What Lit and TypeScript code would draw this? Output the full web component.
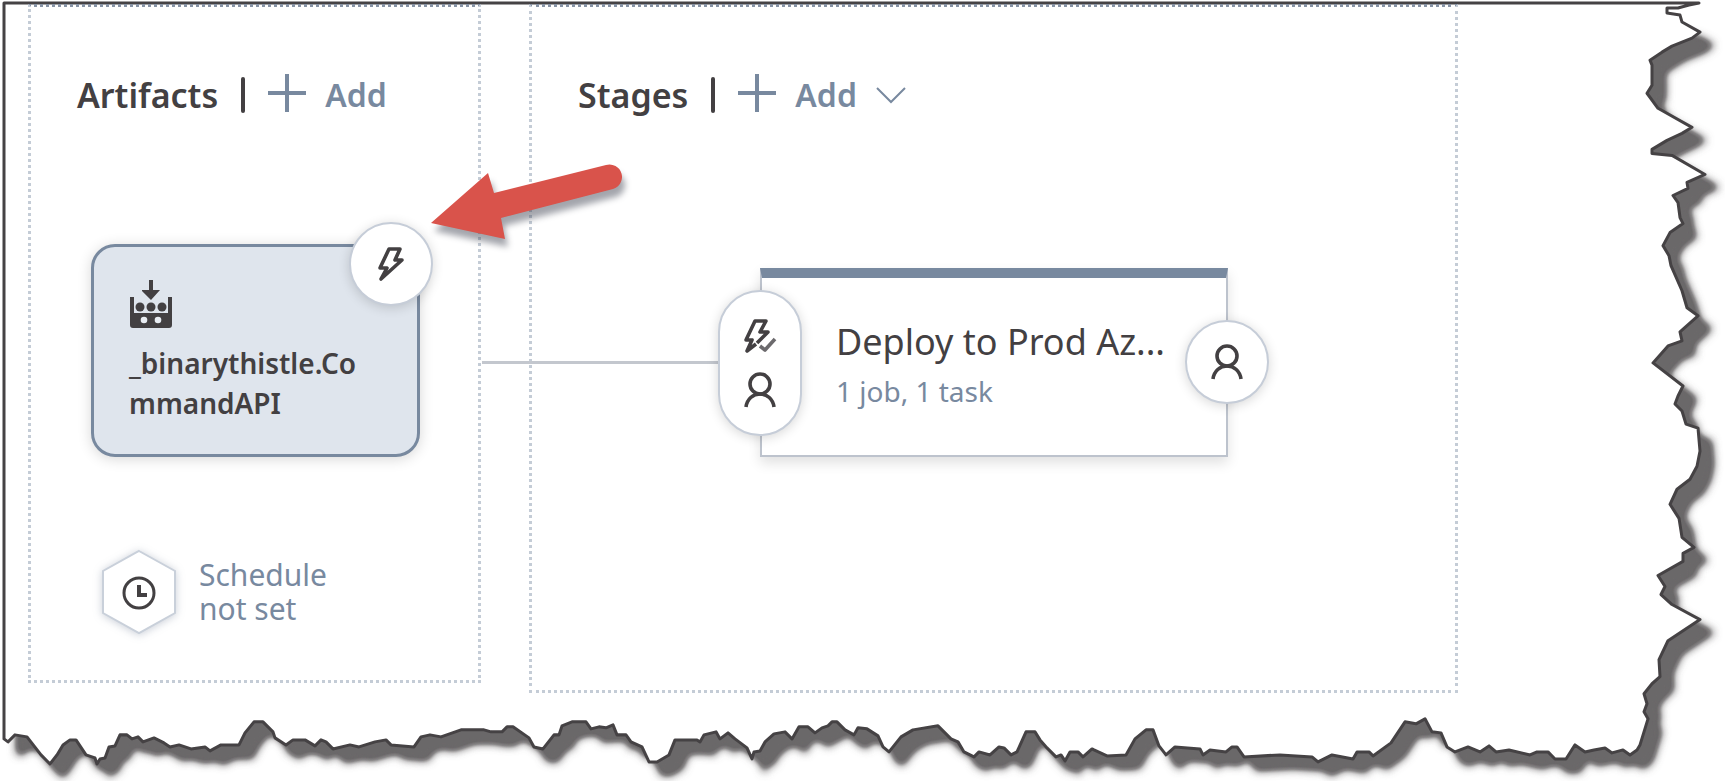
import { LitElement, html, css } from "lit";
import { customElement } from "lit/decorators.js";

type Point = [number, number];

// Torn right side, from the top corner down.
const rightTear: Point[] = [
  [1699, 3], [1689, 5], [1678, 8], [1667, 8], [1667, 13], [1680, 15], [1682, 22], [1700, 32], [1692, 38],
  [1672, 46], [1662, 52], [1650, 60], [1652, 65], [1652, 85], [1647, 93], [1658, 108], [1692, 127], [1682, 133],
  [1667, 140], [1652, 149], [1652, 153], [1672, 155], [1705, 174], [1687, 182], [1688, 188], [1673, 195],
  [1678, 202], [1680, 217], [1683, 223], [1670, 232], [1663, 245], [1669, 255], [1671, 265], [1682, 290],
  [1687, 307], [1698, 315], [1680, 331], [1682, 340], [1668, 345], [1653, 362], [1683, 385], [1678, 395],
  [1675, 403], [1682, 410], [1686, 423], [1698, 427], [1700, 450], [1697, 465], [1690, 478], [1677, 488],
  [1670, 503], [1679, 517], [1682, 536], [1694, 546], [1683, 552], [1683, 560], [1658, 574], [1665, 585],
  [1661, 593], [1672, 603], [1700, 618], [1668, 639], [1659, 658], [1660, 675], [1652, 682], [1644, 692],
  [1647, 702], [1644, 710], [1648, 717], [1640, 743], [1637, 748],
];

// Torn bottom side in three stretches, left to right, each in finer units from its own start.
const UNIT = 2.8;
const bottomStretches: { start: number; points: Point[] }[] = [
  {
    start: 0,
    points: [
      [10, 135], [22, 144], [42, 124], [75, 128], [115, 180], [140, 205], [160, 180], [175, 152], [195, 136],
      [212, 136], [240, 178], [265, 188], [272, 203], [280, 190], [295, 188], [305, 158], [322, 155], [335, 122],
      [355, 122], [370, 135], [385, 128], [400, 142], [430, 132], [460, 145], [475, 158], [500, 152], [535, 163],
      [575, 158], [588, 168], [620, 152], [670, 150], [685, 118], [712, 86], [735, 88], [765, 115], [770, 132],
      [800, 150], [820, 137], [855, 137], [882, 155], [900, 138], [912, 142], [932, 163], [980, 152], [1005, 158],
      [1050, 142], [1080, 137], [1095, 152], [1160, 158], [1180, 130], [1205, 123], [1235, 130], [1290, 108],
      [1355, 108], [1375, 116], [1405, 116], [1420, 100], [1435, 102], [1480, 132], [1495, 158], [1520, 163],
    ],
  },
  {
    start: 540,
    points: [
      [40, 122], [52, 122], [62, 98], [90, 86], [130, 86], [142, 106], [165, 100], [185, 104], [205, 96],
      [215, 122], [240, 124], [255, 142], [285, 158], [305, 198], [328, 198], [360, 180], [378, 137], [440, 137],
      [448, 142], [460, 122], [492, 115], [505, 135], [525, 118], [545, 135], [580, 160], [593, 190], [600, 172],
      [615, 168], [630, 142], [655, 120], [685, 115], [705, 135], [725, 100], [750, 102], [770, 118], [790, 104],
      [805, 98], [818, 86], [832, 86], [855, 108], [878, 122], [890, 104], [915, 106], [945, 125], [960, 158],
      [976, 172], [1010, 130], [1045, 110], [1115, 98], [1150, 135], [1170, 142], [1188, 172], [1215, 184],
      [1230, 172], [1260, 178], [1285, 157], [1300, 160], [1320, 180], [1335, 170], [1360, 115], [1385, 115],
      [1400, 138], [1420, 160], [1445, 184], [1460, 180], [1470, 195], [1485, 172], [1505, 172], [1520, 186],
      [1545, 163],
    ],
  },
  {
    start: 1080,
    points: [
      [40, 165], [75, 183], [130, 178], [155, 135], [185, 108], [205, 108], [220, 155], [240, 180], [265, 157],
      [335, 163], [345, 178], [365, 165], [410, 172], [425, 157], [440, 157], [460, 184], [560, 180], [650, 184],
      [665, 198], [705, 178], [765, 190], [775, 172], [810, 172], [820, 183], [870, 145], [910, 87], [940, 92],
      [965, 77], [985, 115], [1010, 118], [1028, 158], [1050, 172], [1085, 157], [1120, 172], [1145, 155],
      [1165, 172], [1200, 165], [1260, 178], [1280, 172], [1310, 172], [1330, 190], [1360, 190], [1385, 150],
      [1415, 172], [1440, 165], [1470, 160], [1490, 174], [1520, 165], [1540, 178],
    ],
  },
];

const bottomTear: Point[] = bottomStretches
  .flatMap(({ start, points }) =>
    points.map(([x, y]): Point => [Math.round(start + x / UNIT), Math.round(689 + y / UNIT)]),
  )
  .reverse();

const toPoints = (points: Point[]) => points.map((p) => p.join(",")).join(" ");

const outline = toPoints([[4, 3], ...rightTear, ...bottomTear]);

// The shadow leaves out the small notches beside the top corner.
const shadow = toPoints([[8, 3], [1650, 18], [1685, 24], ...rightTear.slice(7), ...bottomTear]);

const paper = html`
  <svg class="paper" viewBox="0 0 1725 781" preserveAspectRatio="none" aria-hidden="true">
    <defs>
      <filter id="fade" x="-5%" y="-5%" width="110%" height="110%">
        <feMorphology operator="dilate" radius="1" />
        <feGaussianBlur stdDeviation="4" />
        <feComponentTransfer><feFuncA type="table" tableValues="0 0.3 0.8 1 1" /></feComponentTransfer>
      </filter>
    </defs>
    <polygon points=${shadow} fill="#6b6869" transform="translate(13 13)" filter="url(#fade)" />
    <polygon points=${outline} fill="#fff" stroke="#454244" stroke-width="3" stroke-linejoin="round" />
  </svg>
`;

const plus = html`
  <svg class="plus" viewBox="0 0 38 38" aria-hidden="true"><path d="M19 0V38M0 19H38" /></svg>
`;

const bolt = html`
  <svg class="icon" viewBox="0 0 28 36" width="28" height="36" aria-hidden="true">
    <path d="M12 3H23L18 14H25L4 33L10 22H3Z" />
  </svg>
`;

const boltCheck = html`
  <svg class="icon" viewBox="0 0 34 36" width="34" height="36" aria-hidden="true">
    <path d="M13 26L4 33L9 22H3L12 3H23L17 14H25L14 25" />
    <path class="check" d="M17 28L22 32L32 21" />
  </svg>
`;

const person = html`
  <svg class="icon" viewBox="0 0 34 36" width="34" height="36" aria-hidden="true">
    <circle cx="17" cy="12" r="10" />
    <path d="M3 35C4 27 10 22 17 22S30 27 31 35" />
  </svg>
`;

@customElement("app-root")
export class AppRoot extends LitElement {
  static styles = css`
    :host {
      display: block;
      position: relative;
      min-height: 100vh;
      box-sizing: border-box;
      padding: 4px 267px 90px 28px;
      background: #fff;
      color: #434042;
      font-family: "Noto Sans", "Open Sans", sans-serif;
    }
    .paper {
      position: absolute;
      inset: 0;
      width: 100%;
      height: 100%;
    }
    .board {
      position: relative;
      display: flex;
      align-items: flex-start;
      gap: 48px;
    }
    .column {
      box-sizing: border-box;
      border: 3px dotted #c4ccd6;
      border-top-color: #8793a5;
    }
    .artifacts {
      flex: 0 0 453px;
      min-height: 679px;
      padding: 60px 58px 0 60px;
    }
    .stages {
      flex: 1 0 720px;
      min-height: 689px;
      padding: 60px 46px 0;
    }
    .head {
      display: flex;
      align-items: center;
      height: 56px;
    }
    .artifacts .head {
      margin-left: -14px;
    }
    h2 {
      margin: 0;
      font-size: 34px;
      line-height: 40px;
      font-weight: 600;
    }
    .rule {
      width: 4px;
      height: 36px;
      margin: 0 23px;
      border-radius: 2px;
      background: #434042;
    }
    button {
      margin: 0;
      padding: 0;
      border: 0;
      background: none;
      color: inherit;
      font: inherit;
      cursor: pointer;
    }
    .add {
      display: flex;
      align-items: center;
      gap: 19px;
      color: #78899f;
      font-size: 32px;
      line-height: 40px;
      font-weight: 600;
    }
    .plus {
      width: 38px;
      height: 38px;
      margin-top: -4px;
      fill: none;
      stroke: #78899f;
      stroke-width: 4;
    }
    .chevron {
      width: 30px;
      height: 18px;
      fill: none;
      stroke: #78899f;
      stroke-width: 2;
    }
    .icon {
      fill: none;
      stroke: #434042;
      stroke-width: 3.6;
      stroke-linejoin: round;
    }
    .check {
      stroke: #6c6a6d;
    }
    .artifact {
      position: relative;
      box-sizing: border-box;
      height: 213px;
      margin-top: 121px;
      padding: 32px 35px;
      border: 3px solid #78899f;
      border-radius: 24px;
      background: #dfe5ed;
      box-shadow: 0 2px 14px rgba(0, 0, 0, 0.16);
    }
    .build {
      display: block;
      width: 44px;
      height: 50px;
      fill: #434042;
    }
    .name {
      margin: 14px 0 0;
      width: 244px;
      font-size: 28px;
      line-height: 40px;
      font-weight: 600;
    }
    .badge {
      position: absolute;
      box-sizing: border-box;
      display: flex;
      flex-direction: column;
      align-items: center;
      justify-content: center;
      width: 84px;
      height: 84px;
      border: 2px solid #c6cdd8;
      border-radius: 42px;
      background: #fff;
      box-shadow: 0 2px 12px rgba(0, 0, 0, 0.16);
    }
    .trigger {
      top: -25px;
      right: -16px;
    }
    .pre {
      top: 12px;
      left: -44px;
      height: 146px;
      gap: 18px;
    }
    .post {
      top: 42px;
      right: -43px;
    }
    .schedule {
      display: flex;
      align-items: center;
      gap: 12px;
      margin-top: 85px;
      color: #78899f;
      font-size: 30px;
      line-height: 34px;
      text-align: left;
    }
    .hex {
      width: 96px;
      height: 100px;
      flex: none;
      overflow: visible;
      filter: drop-shadow(0 1px 4px rgba(60, 80, 110, 0.28));
    }
    .stage {
      position: relative;
      box-sizing: border-box;
      width: 468px;
      height: 189px;
      margin: 145px 0 0 182px;
      padding: 40px 60px 0 74px;
      border: 2px solid #bdc3cd;
      border-top: 10px solid #78899f;
      background: #fff;
      box-shadow: 0 6px 12px rgba(0, 0, 0, 0.12);
    }
    .link {
      position: absolute;
      top: 83px;
      right: 100%;
      width: 280px;
      height: 3px;
      background: #c3c7ce;
    }
    h3 {
      margin: 0;
      font-size: 36px;
      line-height: 48px;
      font-weight: 400;
      white-space: nowrap;
    }
    .jobs {
      display: block;
      color: #78899f;
      font-size: 28px;
      line-height: 40px;
      margin-top: 5px;
      text-decoration: none;
      white-space: nowrap;
    }
    .pointer {
      position: absolute;
      left: 420px;
      top: 150px;
      width: 220px;
      height: 110px;
      overflow: visible;
      filter: drop-shadow(3px 8px 3px rgba(50, 55, 70, 0.45));
      pointer-events: none;
    }
  `;

  render() {
    return html`
      ${paper}
      <main class="board">
        <section class="column artifacts" aria-labelledby="artifacts">
          <div class="head">
            <h2 id="artifacts">Artifacts</h2>
            <span class="rule"></span>
            <button class="add">${plus}<span>Add</span></button>
          </div>
          <article class="artifact">
            <svg class="build" viewBox="0 0 44 50" aria-hidden="true">
              <path d="M1 18H5V34H39V18H43V46Q43 49 40 49H4Q1 49 1 46Z" />
              <path d="M20 1H24V11L29 11H31L22 21L13 12V11H20Z" />
              <circle cx="11" cy="28" r="4.5" />
              <circle cx="22" cy="28" r="4.5" />
              <circle cx="33" cy="28" r="4.5" />
              <circle cx="15" cy="41" r="3.3" fill="#e9edf3" />
              <circle cx="29" cy="41" r="3.3" fill="#e9edf3" />
            </svg>
            <p class="name">_binarythistle.Co<br />mmandAPI</p>
            <button class="badge trigger" aria-label="Continuous deployment trigger">${bolt}</button>
          </article>
          <button class="schedule">
            <svg class="hex" viewBox="0 0 96 100" aria-hidden="true">
              <path d="M48 9L84 29V71L48 91L12 71V29Z" fill="#fff" stroke="#c9d0da" stroke-width="2" />
              <g fill="none" stroke="#434042">
                <circle cx="48" cy="51" r="15" stroke-width="3" />
                <path d="M48 43V53H56" stroke-width="4" />
              </g>
            </svg>
            <span>Schedule<br />not set</span>
          </button>
        </section>
        <section class="column stages" aria-labelledby="stages">
          <div class="head">
            <h2 id="stages">Stages</h2>
            <span class="rule"></span>
            <button class="add">
              ${plus}<span>Add</span>
              <svg class="chevron" viewBox="0 0 30 18" aria-hidden="true"><path d="M1 2L15 16L29 2" /></svg>
            </button>
          </div>
          <article class="stage">
            <span class="link"></span>
            <h3>Deploy to Prod Az...</h3>
            <a class="jobs" href="#tasks">1 job, 1 task</a>
            <button class="badge pre" aria-label="Pre-deployment conditions">${boltCheck}${person}</button>
            <button class="badge post" aria-label="Post-deployment conditions">${person}</button>
          </article>
        </section>
      </main>
      <svg class="pointer" viewBox="420 150 220 110" aria-hidden="true">
        <path d="M431 223L488 173L494 193L606 165A12 12 0 0 1 613 189L501 218L505 239Z" fill="#d9534b" />
      </svg>
    `;
  }
}
